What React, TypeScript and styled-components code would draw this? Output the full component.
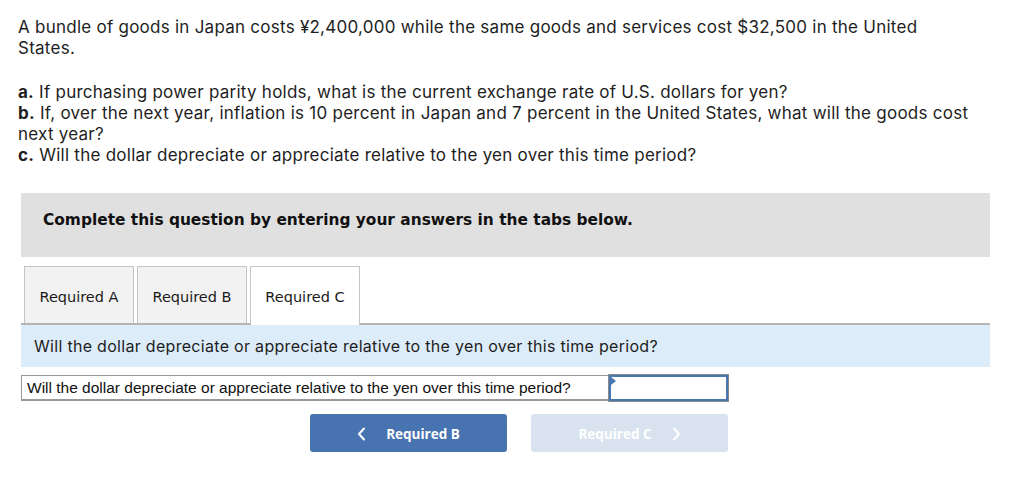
import React from "react";
import styled, { createGlobalStyle } from "styled-components";

const Global = createGlobalStyle`
  html, body { margin: 0; padding: 0; background: #ffffff; }
  body { font-family: "Inter", sans-serif; color: #1e1e1e; }
`;

const Page = styled.div`
  width: 1024px;
  padding: 17px 0 0 0;
  box-sizing: border-box;
`;

const Para = styled.p<{ $gap?: number }>`
  margin: 0 0 ${(p) => p.$gap ?? 0}px 18px;
  width: 1000px;
  font-size: 17px;
  line-height: 21px;
  letter-spacing: 0.25px;
  font-family: "Inter", sans-serif;
  color: #1e1e1e;
  white-space: nowrap;
`;

const Section = styled.div`
  margin: 0 34px 0 21px;
  display: flex;
  flex-direction: column;
`;

const Instruction = styled.div`
  height: 64px;
  box-sizing: border-box;
  background: #e0e0e0;
  display: flex;
  align-items: center;
  padding: 0 0 11px 22px;
  font-family: "DejaVu Sans", Verdana, sans-serif;
  font-weight: bold;
  font-size: 15.4px;
  color: #111;
`;

const TabRow = styled.div`
  display: flex;
  gap: 3px;
  margin-top: 9px;
  padding-left: 3px;
  border-bottom: 2px solid #b4b4b4;
`;

const Tab = styled.div<{ $active?: boolean }>`
  width: 110px;
  box-sizing: border-box;
  border: 1px solid #c4c4c4;
  border-bottom: none;
  background: ${(p) => (p.$active ? "#ffffff" : "#f2f2f2")};
  margin-bottom: ${(p) => (p.$active ? "-2px" : "0")};
  height: ${(p) => (p.$active ? "59px" : "57px")};
  display: flex;
  align-items: center;
  justify-content: center;
  font-family: "DejaVu Sans", Verdana, sans-serif;
  font-size: 14.5px;
  color: #1a1a1a;
  padding-top: 4px;
  padding-bottom: ${(p) => (p.$active ? "2px" : "0")};
`;

const Prompt = styled.div`
  height: 42px;
  background: #ddecf9;
  display: flex;
  align-items: center;
  padding-left: 13px;
  font-family: "Inter", sans-serif;
  font-size: 16px;
  letter-spacing: 0.3px;
  color: #1e1e1e;
`;

const AnswerRow = styled.div`
  display: flex;
  margin-top: 8px;
  height: 26px;
`;

const LabelCell = styled.div`
  width: 588px;
  box-sizing: border-box;
  border: 1px solid #9a9a9a;
  border-bottom-width: 2px;
  border-right: none;
  display: flex;
  align-items: center;
  padding-left: 5px;
  font-family: "Liberation Sans", Arial, sans-serif;
  font-size: 15.5px;
  color: #111;
  white-space: nowrap;
`;

const InputCell = styled.div`
  position: relative;
  width: 119px;
  box-sizing: border-box;
  border: 2px solid #4a76b2;
  outline: 1px solid #8a8a8a;
  background: #fff;
`;

const Marker = styled.div`
  position: absolute;
  left: 0;
  top: 0;
  width: 0;
  height: 0;
  border-top: 4px solid transparent;
  border-bottom: 4px solid transparent;
  border-left: 5px solid #4a76b2;
`;

const NavRow = styled.div`
  display: flex;
  gap: 24px;
  margin-top: 13px;
  padding-left: 289px;
`;

const NavButton = styled.div<{ $disabled?: boolean }>`
  width: 197px;
  height: 38px;
  border-radius: 3px;
  background: ${(p) => (p.$disabled ? "#d9e3ef" : "#4873b1")};
  color: #ffffff;
  display: flex;
  align-items: center;
  justify-content: center;
  gap: 20px;
  padding-top: 2px;
  box-sizing: border-box;
  font-family: "Open Sans", sans-serif;
  font-weight: 700;
  font-size: 13.5px;
`;

const Chevron = ({ dir }: { dir: "left" | "right" }) => (
  <svg width="9" height="14" viewBox="0 0 9 14" fill="none">
    <path
      d={dir === "left" ? "M7 1.5L2 7l5 5.5" : "M2 1.5L7 7l-5 5.5"}
      stroke="#ffffff"
      strokeWidth="2"
      strokeLinecap="round"
      strokeLinejoin="round"
    />
  </svg>
);

export default function App() {
  return (
    <>
      <Global />
      <Page>
        <Para $gap={23}>
          A bundle of goods in Japan costs ¥2,400,000 while the same goods and services cost $32,500 in the United
          <br />
          States.
        </Para>
        <Para $gap={27}>
          <b>a.</b> If purchasing power parity holds, what is the current exchange rate of U.S. dollars for yen?
          <br />
          <b>b.</b> If, over the next year, inflation is 10 percent in Japan and 7 percent in the United States, what will the goods cost
          <br />
          next year?
          <br />
          <b>c.</b> Will the dollar depreciate or appreciate relative to the yen over this time period?
        </Para>
        <Section>
          <Instruction>Complete this question by entering your answers in the tabs below.</Instruction>
          <TabRow>
            <Tab>Required A</Tab>
            <Tab>Required B</Tab>
            <Tab $active>Required C</Tab>
          </TabRow>
          <Prompt>Will the dollar depreciate or appreciate relative to the yen over this time period?</Prompt>
          <AnswerRow>
            <LabelCell>Will the dollar depreciate or appreciate relative to the yen over this time period?</LabelCell>
            <InputCell>
              <Marker />
            </InputCell>
          </AnswerRow>
          <NavRow>
            <NavButton>
              <Chevron dir="left" />
              Required B
            </NavButton>
            <NavButton $disabled>
              Required C
              <Chevron dir="right" />
            </NavButton>
          </NavRow>
        </Section>
      </Page>
    </>
  );
}
